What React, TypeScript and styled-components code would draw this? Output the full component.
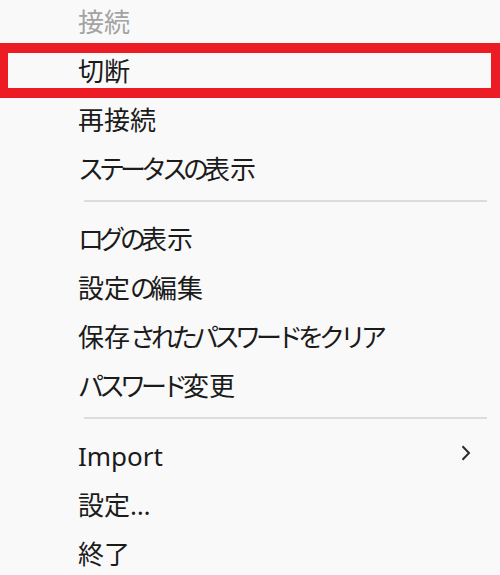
import React from 'react'
import styled, { createGlobalStyle } from 'styled-components';

const Global = createGlobalStyle`
    html, body {
        margin: 0;
        padding: 0;
        background: #f9f9f9;
    }
`;

type Entry =
    | { kind: 'item'; label: string; disabled?: boolean; marked?: boolean; sub?: boolean }
    | { kind: 'sep' };

const entries: Entry[] = [
    { kind: 'item', label: '接続', disabled: true },
    { kind: 'item', label: '切断', marked: true },
    { kind: 'item', label: '再接続' },
    { kind: 'item', label: 'ステータスの表示' },
    { kind: 'sep' },
    { kind: 'item', label: 'ログの表示' },
    { kind: 'item', label: '設定の編集' },
    { kind: 'item', label: '保存されたパスワードをクリア' },
    { kind: 'item', label: 'パスワード変更' },
    { kind: 'sep' },
    { kind: 'item', label: 'Import', sub: true },
    { kind: 'item', label: '設定…' },
    { kind: 'item', label: '終了' },
];

// kana is narrower than kanji in the original UI font
const splitKana = (s: string) =>
    s.split(/([\u3040-\u30ff]+)/).filter(Boolean).map((part, i) =>
        /[\u3040-\u30ff]/.test(part) ? <Kana key={i}>{part}</Kana> : <span key={i}>{part}</span>
    );

const App: React.FC = () => {
  return (
    <>
        <Global />
        <Menu>
            {entries.map((e, i) =>
                e.kind === 'sep' ? (
                    <Separator key={i} />
                ) : (
                    <Item key={i} $disabled={e.disabled} $marked={e.marked}>
                        <Label>{splitKana(e.label)}</Label>
                        {e.sub && (
                            <Chevron width="10" height="16" viewBox="0 0 10 16">
                                <polyline points="1.5,1.2 8,8 1.5,14.8" fill="none" stroke="#2b2b2b" strokeWidth="2" />
                            </Chevron>
                        )}
                    </Item>
                )
            )}
        </Menu>
    </>
  )
}

export default App;

const Menu = styled.div`
    width: 500px;
    height: 575px;
    overflow: hidden;
    display: flex;
    flex-direction: column;
    margin-top: -3px;
    font-family: "Noto Sans", "Noto Sans CJK JP", sans-serif;
`;

const Item = styled.div<{ $disabled?: boolean; $marked?: boolean }>`
    position: relative;
    height: 49px;
    flex-shrink: 0;
    display: flex;
    align-items: center;
    justify-content: space-between;
    padding: 0 29px 0 78px;
    font-size: 26px;
    color: ${p => (p.$disabled ? '#a3a3a3' : '#1b1b1b')};
    &::after {
        content: '';
        display: ${p => (p.$marked ? 'block' : 'none')};
        position: absolute;
        left: 0;
        right: 0;
        top: -3px;
        bottom: -3px;
        border: 10px solid #ed1c24;
        border-left-width: 8px;
        border-right-width: 9px;
        background: transparent;
        pointer-events: none;
    }
`;

const Label = styled.span`
    line-height: 1;
    white-space: nowrap;
`;

const Kana = styled.span`
    letter-spacing: -5px;
`;

const Chevron = styled.svg`
    display: block;
    margin-bottom: 6px;
`;

const Separator = styled.div`
    flex-shrink: 0;
    height: 2px;
    margin: 7px 13px 12px 84px;
    background: #dcdcdc;
`;
